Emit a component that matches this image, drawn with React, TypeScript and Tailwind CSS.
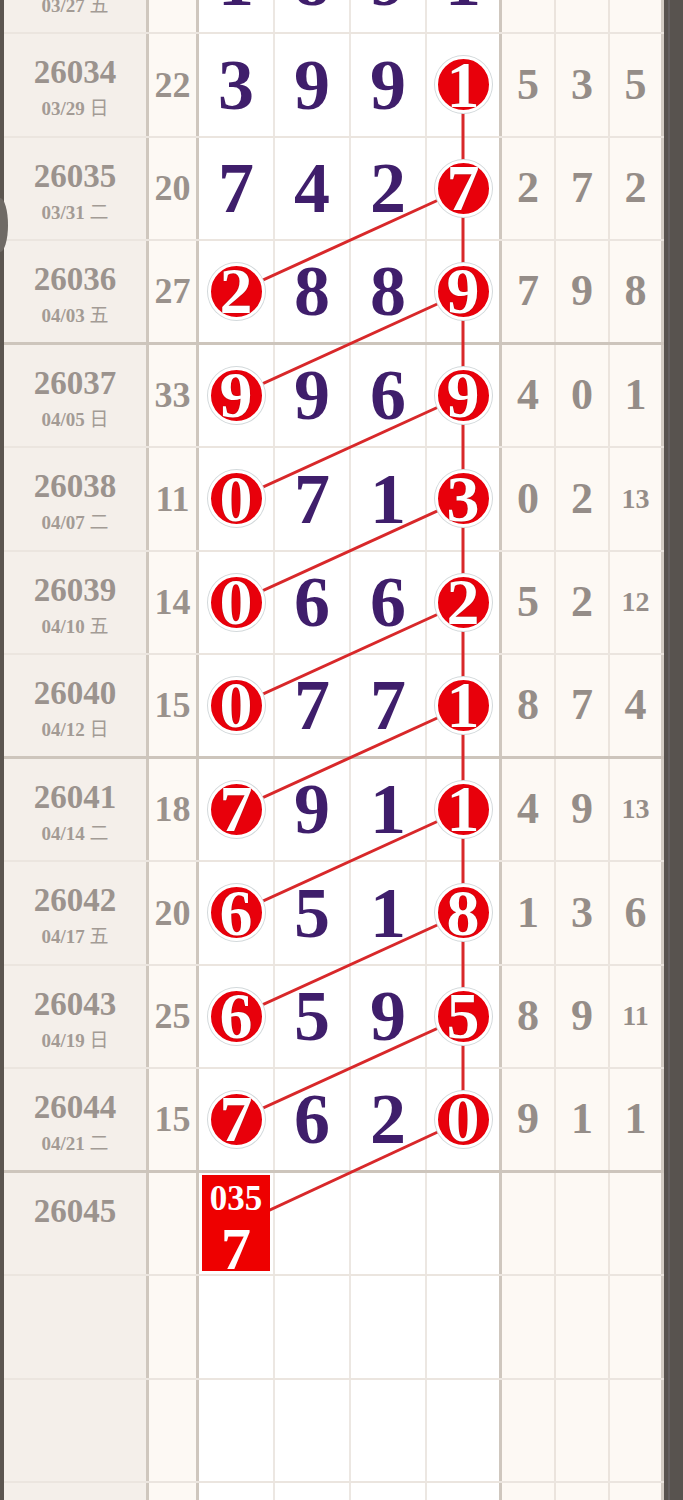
import React from "react";

type Row = {
  id: string;
  date: string;
  sum: string;
  d: number[];
  c: number[];
  r: string[];
  box?: boolean;
};

const rows: Row[] = [
  { id: "26033", date: "03/27 五", sum: "19", d: [1, 8, 9, 1], c: [], r: ["3", "1", "8"] },
  { id: "26034", date: "03/29 日", sum: "22", d: [3, 9, 9, 1], c: [3], r: ["5", "3", "5"] },
  { id: "26035", date: "03/31 二", sum: "20", d: [7, 4, 2, 7], c: [3], r: ["2", "7", "2"] },
  { id: "26036", date: "04/03 五", sum: "27", d: [2, 8, 8, 9], c: [0, 3], r: ["7", "9", "8"] },
  { id: "26037", date: "04/05 日", sum: "33", d: [9, 9, 6, 9], c: [0, 3], r: ["4", "0", "1"] },
  { id: "26038", date: "04/07 二", sum: "11", d: [0, 7, 1, 3], c: [0, 3], r: ["0", "2", "13"] },
  { id: "26039", date: "04/10 五", sum: "14", d: [0, 6, 6, 2], c: [0, 3], r: ["5", "2", "12"] },
  { id: "26040", date: "04/12 日", sum: "15", d: [0, 7, 7, 1], c: [0, 3], r: ["8", "7", "4"] },
  { id: "26041", date: "04/14 二", sum: "18", d: [7, 9, 1, 1], c: [0, 3], r: ["4", "9", "13"] },
  { id: "26042", date: "04/17 五", sum: "20", d: [6, 5, 1, 8], c: [0, 3], r: ["1", "3", "6"] },
  { id: "26043", date: "04/19 日", sum: "25", d: [6, 5, 9, 5], c: [0, 3], r: ["8", "9", "11"] },
  { id: "26044", date: "04/21 二", sum: "15", d: [7, 6, 2, 0], c: [0, 3], r: ["9", "1", "1"] },
  { id: "26045", date: "", sum: "", d: [], c: [], r: ["", "", ""], box: true },
  { id: "", date: "", sum: "", d: [], c: [], r: ["", "", ""] },
  { id: "", date: "", sum: "", d: [], c: [], r: ["", "", ""] },
  { id: "", date: "", sum: "", d: [], c: [], r: ["", "", ""] },
];

const RH = 103.5;
const cy = (i: number) => i * RH + 50.75;
const X1 = 232;
const X4 = 459;

function Circle({ n }: { n: number }) {
  return (
    <div className="relative z-20 flex h-[57px] w-[57px] items-center justify-center rounded-full border-[3px] border-white bg-[#e8000b] shadow-[0_0_0_1px_#d3d9db]">
      <span className="text-[66px] font-bold leading-none text-white [text-shadow:0_0_1px_#7a0000]">{n}</span>
    </div>
  );
}

function Lines() {
  const segs: { x1: number; y1: number; x2: number; y2: number }[] = [];
  segs.push({ x1: X4, y1: cy(1), x2: X4, y2: cy(11) });
  for (let i = 3; i <= 11; i++) {
    segs.push({ x1: X4, y1: cy(i - 1), x2: X1, y2: cy(i) });
  }
  segs.push({ x1: X4, y1: cy(11), x2: X1, y2: cy(12) + 2 });
  return (
    <svg className="pointer-events-none absolute left-0 top-0 z-10" width={660} height={1656}>
      {segs.map((s, k) => (
        <line key={k} x1={s.x1} y1={s.y1} x2={s.x2} y2={s.y2} stroke="#d8282a" strokeWidth={3} />
      ))}
    </svg>
  );
}

export default function App() {
  return (
    <div className="relative flex h-[1500px] w-[683px] overflow-hidden bg-[#f4efea] font-['Liberation_Serif','Noto_Sans_CJK_SC',serif]">
      <div className="h-full w-[4px] bg-[#5b5550]" />
      <div className="absolute left-0 top-[198px] z-30 h-[54px] w-[8px] rounded-[0_100%_100%_0/0_50%_50%_0] bg-[#6f6a65]" />
      <div className="relative mt-[-69.5px] flex w-[660px] flex-col self-start">
        <Lines />
        {rows.map((row, i) => {
          const thick = i % 4 === 3;
          return (
            <div
              key={i}
              className={`flex h-[103.5px] ${thick ? "border-b-[3px] border-[#cdc5bc]" : "border-b-2 border-[#ebe5df]"}`}
            >
              <div className="flex w-[145px] flex-col items-center border-r-[3px] border-[#cfc7be] bg-[#f4efea] pt-[22px]">
                <div className="text-[33px] font-bold leading-none text-[#9b938e]">{row.id}</div>
                <div className="mt-[8px] text-[19px] font-bold leading-none text-[#a39b95]">
                  {row.date ? (
                    <>
                      {row.date.slice(0, 6)}
                      <span className="font-['Noto_Sans_CJK_SC',sans-serif] font-normal">{row.date.slice(6)}</span>
                    </>
                  ) : (
                    "\u00a0"
                  )}
                </div>
              </div>
              <div className="flex w-[50px] items-center justify-center border-r-[3px] border-[#cfc7be] bg-[#fdf9f4] text-[36px] font-bold leading-none text-[#9a928c]">
                {row.sum}
              </div>
              {[0, 1, 2, 3].map((k) => (
                <div
                  key={k}
                  className={`flex items-center justify-center bg-white ${
                    k === 3 ? "w-[75px] border-r-[3px] border-[#cfc7be]" : "w-[76px] border-r-2 border-[#ece7e2]"
                  }`}
                >
                  {row.box && k === 0 ? (
                    <div className="relative z-20 flex h-[96px] w-[68px] flex-col items-center bg-[#ee0000] pt-[6px] text-white">
                      <span className="text-[35px] font-bold leading-none">035</span>
                      <span className="mt-[3px] text-[60px] font-bold leading-none">7</span>
                    </div>
                  ) : row.d.length ? (
                    row.c.includes(k) ? (
                      <Circle n={row.d[k]} />
                    ) : (
                      <span className="text-[72px] font-bold leading-none text-[#3f1e6b]">{row.d[k]}</span>
                    )
                  ) : null}
                </div>
              ))}
              {[0, 1, 2].map((k) => (
                <div
                  key={k}
                  className={`flex w-[54px] items-center justify-center bg-[#fdf9f4] font-bold leading-none text-[#958d88] ${
                    k === 2 ? "border-r-[3px] border-[#d3ccc4]" : "border-r-2 border-[#ebe4dd]"
                  } ${row.r[k].length > 1 ? "text-[28px]" : "text-[44px]"}`}
                >
                  {row.r[k]}
                </div>
              ))}
            </div>
          );
        })}
      </div>
      <div className="flex h-full w-[19px] bg-[#58534f]">
        <div className="ml-[4px] h-full w-[2px] bg-[#646060]" />
      </div>
    </div>
  );
}
